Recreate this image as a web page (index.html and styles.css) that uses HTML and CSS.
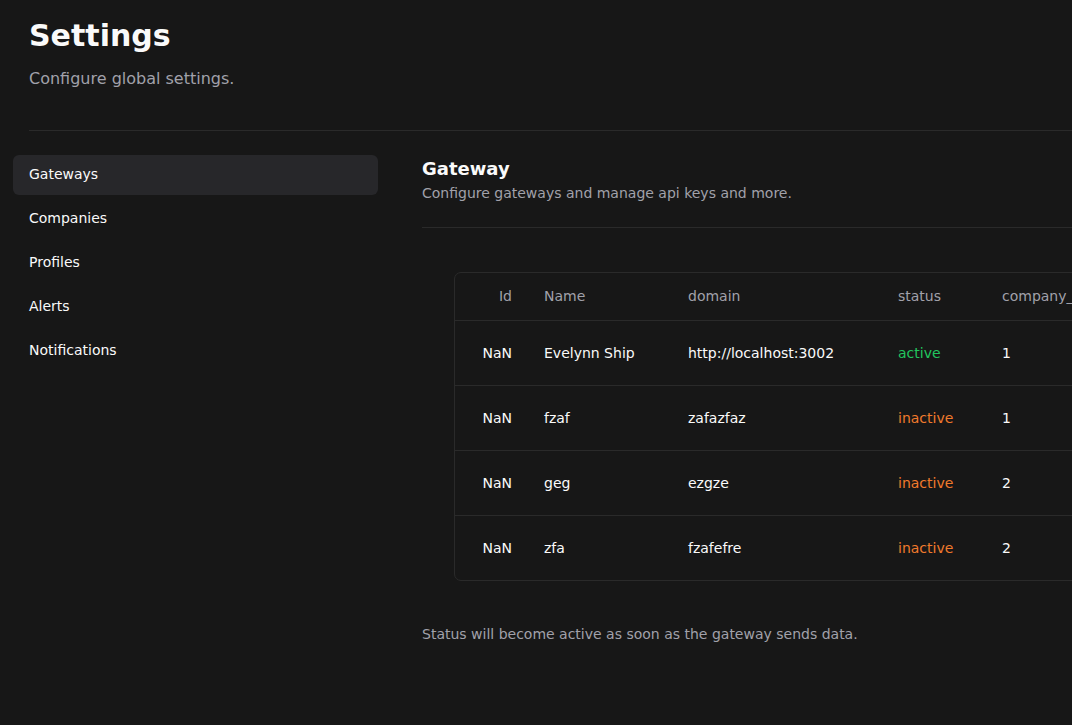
FILE: index.html
```html
<!DOCTYPE html>
<html lang="en">
<head>
<meta charset="utf-8">
<title>Settings</title>
<link rel="stylesheet" href="styles.css">
</head>
<body>
<div class="page">
  <header class="page-header">
    <h1 class="page-title">Settings</h1>
    <p class="page-subtitle">Configure global settings.</p>
  </header>
  <hr class="divider">
  <div class="layout">
    <nav class="sidebar">
      <a class="nav-item active">Gateways</a>
      <a class="nav-item">Companies</a>
      <a class="nav-item">Profiles</a>
      <a class="nav-item">Alerts</a>
      <a class="nav-item">Notifications</a>
    </nav>
    <main class="content">
      <div class="section-head">
        <h2 class="section-title">Gateway</h2>
        <p class="section-subtitle">Configure gateways and manage api keys and more.</p>
      </div>
      <hr class="divider section-divider">
      <div class="table-wrap">
        <div class="table-card">
          <table class="data-table">
            <thead>
              <tr>
                <th class="col-id">Id</th>
                <th class="col-name">Name</th>
                <th class="col-domain">domain</th>
                <th class="col-status">status</th>
                <th class="col-company">company_id</th>
              </tr>
            </thead>
            <tbody>
              <tr>
                <td class="col-id">NaN</td>
                <td>Evelynn Ship</td>
                <td>http://localhost:3002</td>
                <td class="status-active">active</td>
                <td>1</td>
              </tr>
              <tr>
                <td class="col-id">NaN</td>
                <td>fzaf</td>
                <td>zafazfaz</td>
                <td class="status-inactive">inactive</td>
                <td>1</td>
              </tr>
              <tr>
                <td class="col-id">NaN</td>
                <td>geg</td>
                <td>ezgze</td>
                <td class="status-inactive">inactive</td>
                <td>2</td>
              </tr>
              <tr>
                <td class="col-id">NaN</td>
                <td>zfa</td>
                <td>fzafefre</td>
                <td class="status-inactive">inactive</td>
                <td>2</td>
              </tr>
            </tbody>
          </table>
        </div>
      </div>
      <p class="footnote">Status will become active as soon as the gateway sends data.</p>
    </main>
  </div>
</div>
</body>
</html>
```

FILE: styles.css
```css
* { box-sizing: border-box; }
html, body {
  margin: 0;
  padding: 0;
  background: #171717;
  overflow: hidden;
}
body {
  font-family: "DejaVu Sans", sans-serif;
  color: #fafafa;
  width: 1072px;
  height: 725px;
}
.page {
  width: 1300px;
  padding: 18px 0 0 29px;
}
.page-title {
  margin: 0;
  font-size: 30px;
  line-height: 36px;
  font-weight: 700;
  color: #fafafa;
}
.page-subtitle {
  margin: 13px 0 0 0;
  font-size: 16px;
  line-height: 24px;
  color: #a1a1aa;
}
.divider {
  border: 0;
  border-top: 1px solid #2a2a2a;
  margin: 39px 0 0 0;
}
.layout {
  display: flex;
  margin-left: -16px;
  padding-top: 24px;
  gap: 44px;
}
.sidebar {
  width: 365px;
  flex: none;
  display: flex;
  flex-direction: column;
  gap: 4px;
}
.nav-item {
  display: block;
  height: 40px;
  line-height: 38px;
  padding: 0 16px;
  font-size: 14px;
  color: #fafafa;
  border-radius: 6px;
}
.nav-item.active { background: #27272a; }
.content {
  flex: 1;
  padding-top: 2px;
}
.section-title {
  margin: 0;
  font-size: 18px;
  line-height: 24px;
  font-weight: 700;
}
.section-subtitle {
  margin: 2px 0 0 0;
  font-size: 14px;
  line-height: 20px;
  color: #a1a1aa;
}
.section-divider { margin-top: 24px; }
.table-wrap {
  padding: 44px 0 0 32px;
}
.table-card {
  border: 1px solid #2a2a2a;
  border-radius: 7px;
  width: 800px;
  overflow: hidden;
}
.data-table {
  border-collapse: collapse;
  width: 100%;
  font-size: 14px;
}
.data-table th {
  height: 47px;
  font-weight: 400;
  color: #a1a1aa;
  text-align: left;
  padding: 0 16px;
  border-bottom: 1px solid #2a2a2a;
}
.data-table td {
  height: 65px;
  padding: 0 16px;
  color: #fafafa;
  border-bottom: 1px solid #2a2a2a;
}
.data-table tbody tr:last-child td { border-bottom: 0; }
.data-table .col-id { text-align: right; width: 73px; }
.data-table .col-name { width: 144px; }
.data-table .col-domain { width: 210px; }
.data-table .col-status { width: 104px; }
.status-active { color: #22c55e !important; }
.status-inactive { color: #f07a2c !important; }
.footnote {
  margin: 43px 0 0 0;
  font-size: 14px;
  line-height: 20px;
  color: #a1a1aa;
}
```
